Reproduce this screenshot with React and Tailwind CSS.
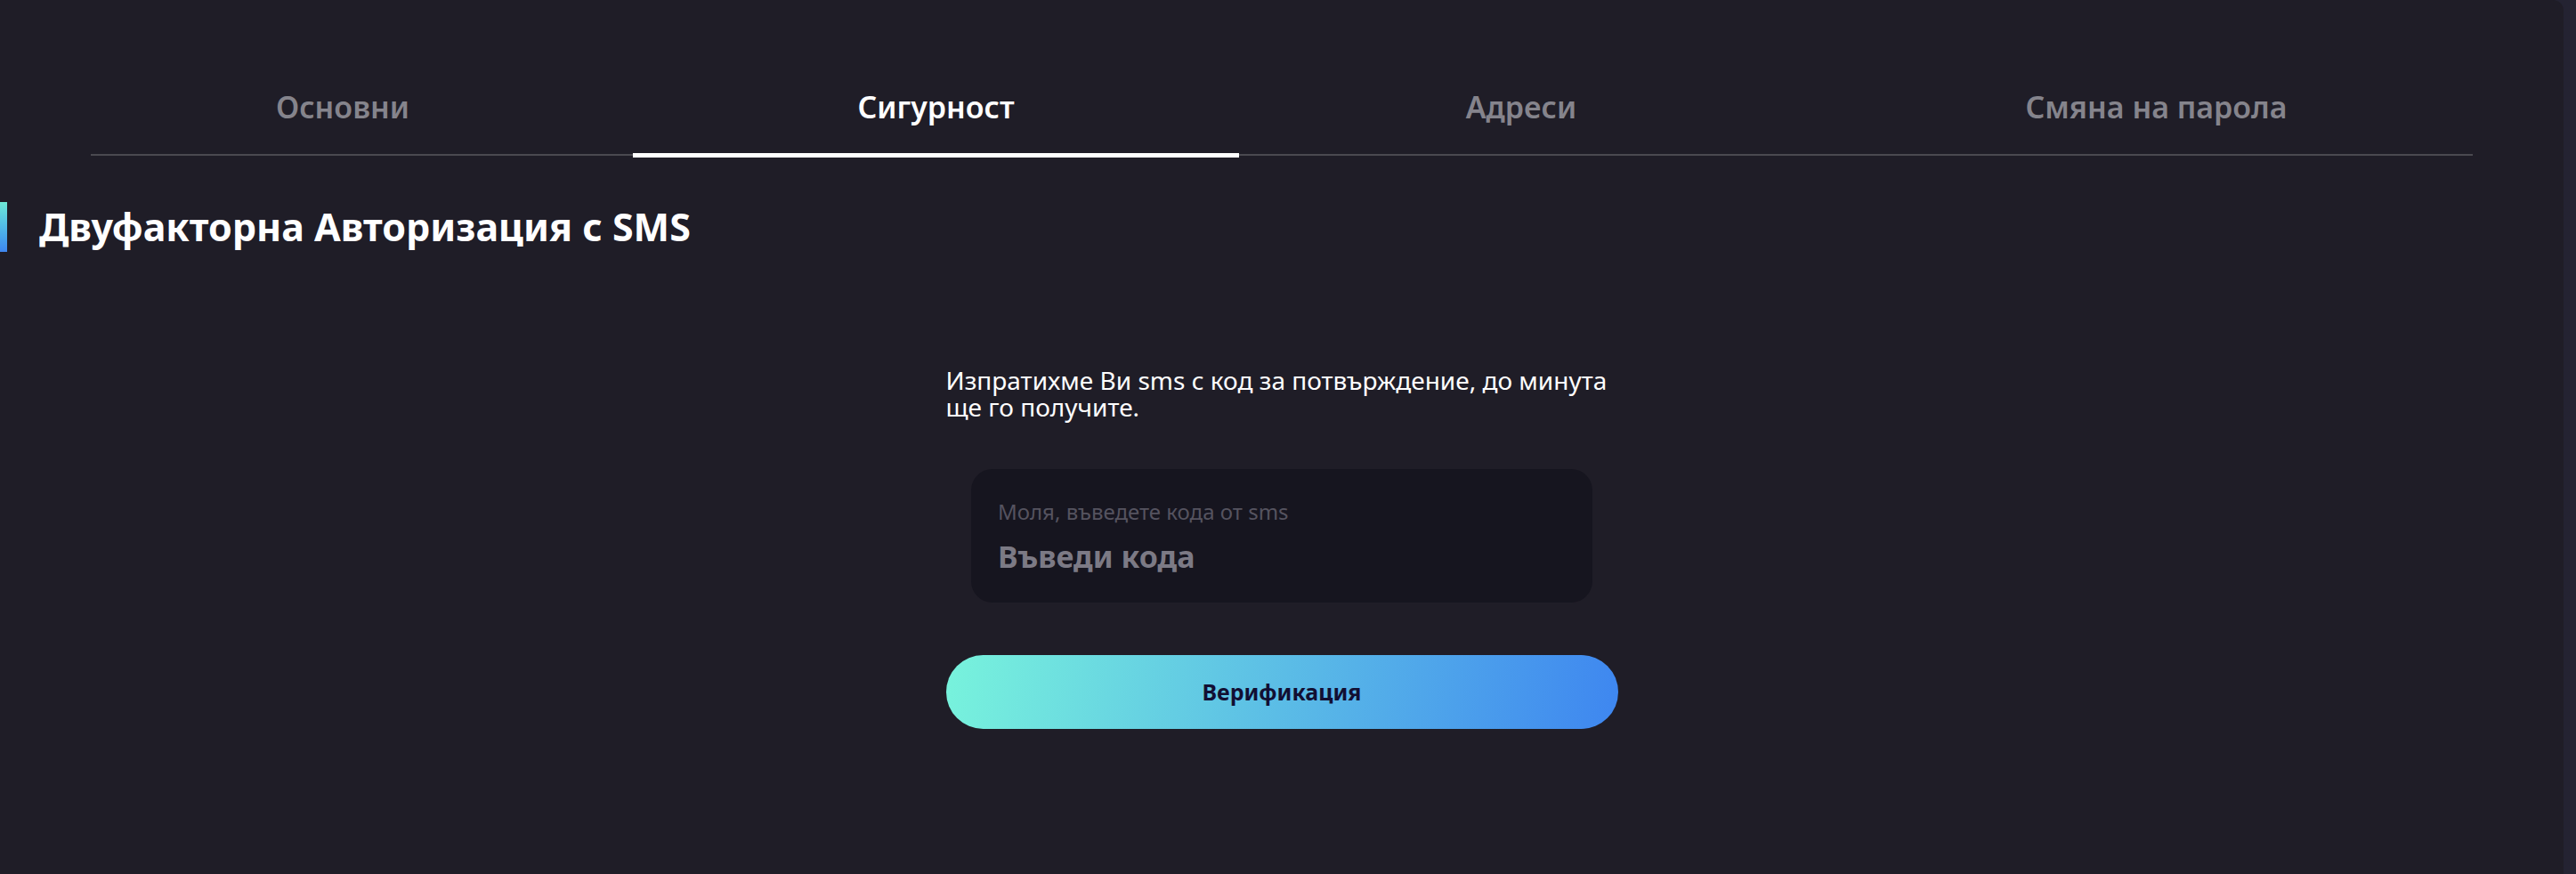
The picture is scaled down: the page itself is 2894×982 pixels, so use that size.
const tabs = [
  { label: "Основни", cls: "w-[566px]" },
  { label: "Сигурност", cls: "ml-[43px] w-[681px]", active: true },
  { label: "Адреси", cls: "ml-[45px] w-[544px]" },
  { label: "Смяна на парола", cls: "ml-[86px] flex-1" },
];

function App() {
  return (
    <div
      className="flex h-[982px] w-full bg-[#242332]"
      style={{ fontFamily: '"Noto Sans", "Open Sans", sans-serif' }}
    >
      <main className="flex h-full w-[2880px] flex-col rounded-tr-[12px] bg-[#1f1d27]">
        <nav className="mx-[102px] flex border-b-2 border-[#4a4950] pt-[96px]">
          {tabs.map((tab) => (
            <button
              key={tab.label}
              type="button"
              className={`relative pb-[29px] text-center text-[34px] leading-[48px] font-semibold ${tab.cls} ${
                tab.active ? "text-white" : "text-[#85848c]"
              }`}
            >
              {tab.label}
              {tab.active && (
                <span className="absolute right-0 bottom-[-4px] left-0 h-[5px] bg-white" />
              )}
            </button>
          ))}
        </nav>

        <div className="mt-[52px] flex items-center">
          <span className="h-[56px] w-[8px] bg-linear-to-b from-[#6ee9d6] to-[#3f86f0]" />
          <h1 className="ml-[36px] text-[43px] leading-[56px] font-bold text-white">
            Двуфакторна Авторизация с SMS
          </h1>
        </div>

        <section className="mx-auto mt-[129px] flex w-[755px] flex-col">
          <p className="text-[28px] leading-[30px] text-white">
            Изпратихме Ви sms с код за потвърждение, до минута ще го получите.
          </p>

          <div className="mx-auto mt-[55px] flex h-[150px] w-[698px] flex-col rounded-[24px] bg-[#16151f] px-[30px] pt-[33px]">
            <label className="text-[24px] leading-[30px] text-[#55535f]">
              Моля, въведете кода от sms
            </label>
            <input
              placeholder="Въведи кода"
              className="mt-[15px] bg-transparent text-[34px] leading-[40px] font-bold text-white outline-none placeholder:text-[#7c7a85]"
            />
          </div>

          <button
            type="button"
            className="mt-[59px] h-[83px] w-full rounded-full bg-[linear-gradient(100deg,#78f3dc,#3e86f0)] text-[25px] font-bold text-[#120f33]"
          >
            Верификация
          </button>
        </section>
      </main>
    </div>
  );
}

export default App;
